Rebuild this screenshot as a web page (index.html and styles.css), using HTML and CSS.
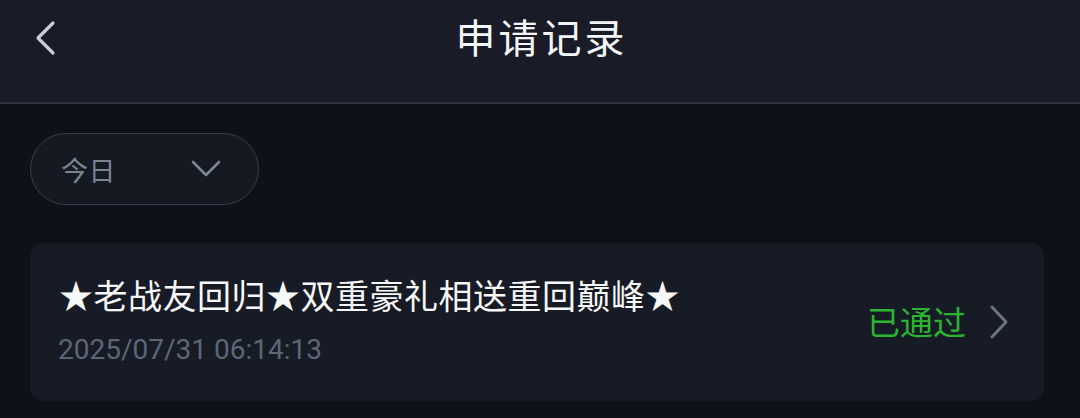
FILE: index.html
```html
<!DOCTYPE html>
<html lang="zh-CN">
<head>
  <meta charset="UTF-8" />
  <meta name="viewport" content="width=device-width, initial-scale=1.0" />
  <title>申请记录</title>
  <link rel="stylesheet" href="styles.css">
</head>
<body>
  <div class="header">
    <a class="back" href="#">
      <svg width="24" height="36" viewBox="0 0 24 36"><path d="M20 3 L5 18 L20 33" fill="none" stroke="#c9cdd6" stroke-width="3.2" stroke-linecap="round" stroke-linejoin="round"/></svg>
    </a>
    <h1>申请记录</h1>
  </div>

  <div class="content">
    <div class="filter">
      <span>今日</span>
      <svg width="32" height="20" viewBox="0 0 32 20"><path d="M3 3 L16 16 L29 3" fill="none" stroke="#7d8696" stroke-width="2.6" stroke-linecap="round" stroke-linejoin="round"/></svg>
    </div>

    <div class="record">
      <div class="info">
        <div class="title">★老战友回归★双重豪礼相送重回巅峰★</div>
        <div class="date">2025/07/31 06:14:13</div>
      </div>
      <div class="status">
        <span>已通过</span>
        <svg width="22" height="36" viewBox="0 0 22 36"><path d="M4 3 L18 18 L4 33" fill="none" stroke="#6b7386" stroke-width="3" stroke-linecap="round" stroke-linejoin="round"/></svg>
      </div>
    </div>
  </div>
</body>
</html>
```

FILE: styles.css
```css
* {
  margin: 0;
  padding: 0;
  box-sizing: border-box;
  font-family: 'Noto Sans CJK SC', 'Noto Sans', sans-serif;
}

body {
  background: #0e111a;
  width: 1080px;
  height: 418px;
  overflow: hidden;
}

.header {
  height: 104px;
  background: #191c27;
  border-bottom: 2px solid #2c3545;
  display: flex;
  align-items: center;
  justify-content: center;
  position: relative;
  padding-bottom: 30px;
}

.header .back {
  position: absolute;
  left: 33px;
  top: 20px;
  display: flex;
}

.header h1 {
  color: #f4f5f7;
  font-size: 40px;
  font-weight: 400;
  letter-spacing: 3px;
  line-height: 1;
  margin-left: 3px;
}

.content {
  padding: 29px 36px 0 30px;
}

.filter {
  width: 229px;
  height: 72px;
  border: 1.5px solid #373e4d;
  border-radius: 36px;
  background: #151922;
  display: flex;
  align-items: center;
  justify-content: space-between;
  padding: 0 36px 0 30px;
}

.filter span {
  color: #7b8393;
  font-size: 27px;
  letter-spacing: 0.5px;
}

.record {
  margin-top: 38px;
  height: 158px;
  background: #171b25;
  border-radius: 14px;
  display: flex;
  align-items: center;
  justify-content: space-between;
  padding: 0 34px 0 28px;
}

.info {
  margin-top: -2px;
}

.info .title {
  color: #f7f7f8;
  font-size: 34px;
  line-height: 40px;
  letter-spacing: 0.5px;
  padding-left: 1px;
}

.info .date {
  color: #5d6677;
  font-size: 28px;
  line-height: 36px;
  margin-top: 17px;
  font-family: 'Roboto', 'Noto Sans', sans-serif;
}

.status {
  display: flex;
  align-items: center;
  gap: 22px;
}

.status span {
  color: #2ab530;
  font-size: 33px;
  margin-top: -3px;
}
```
